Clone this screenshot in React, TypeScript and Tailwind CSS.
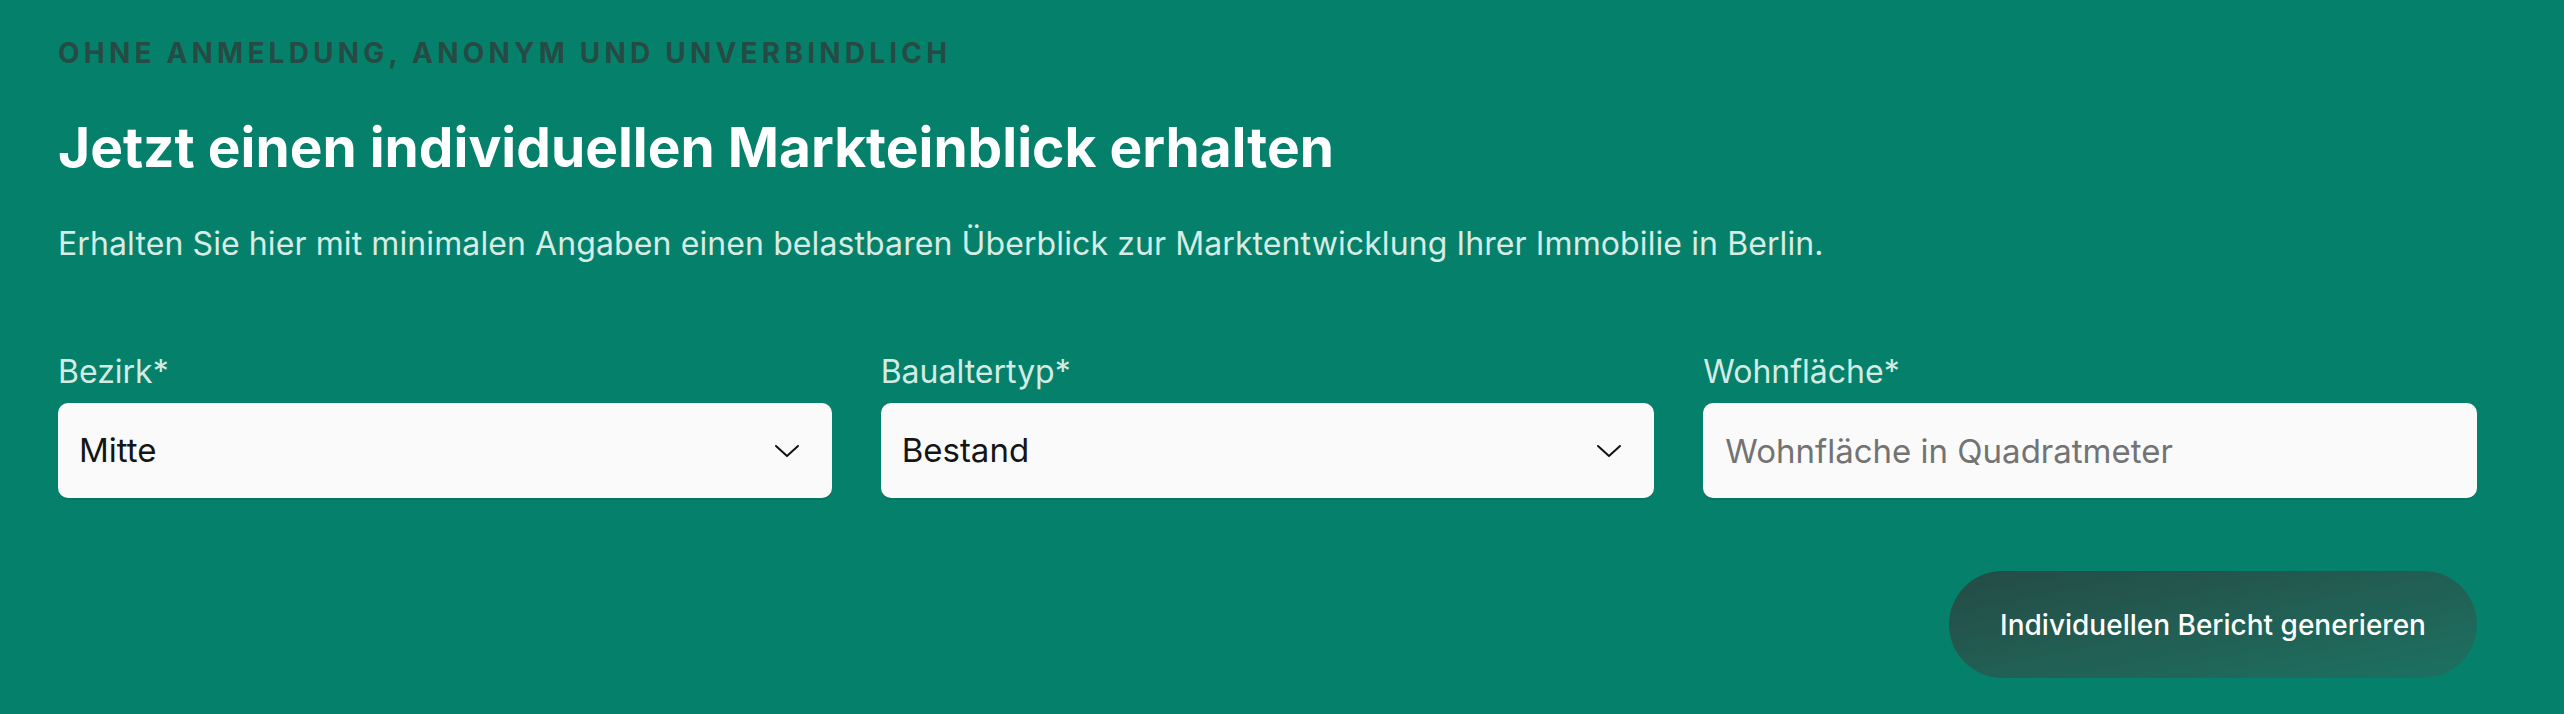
import { useState } from "react";

function Chevron() {
  return (
    <svg
      className="h-[14px] w-[26px] shrink-0"
      viewBox="0 0 26 14"
      fill="none"
      stroke="#111"
      strokeWidth="2"
      strokeLinecap="round"
      strokeLinejoin="round"
    >
      <path d="M2 2l11 10L24 2" />
    </svg>
  );
}

function SelectField({ label, value }: { label: string; value: string }) {
  return (
    <div className="flex flex-col">
      <label className="text-[32px] leading-[48px] text-[#d3ebe2]">{label}</label>
      <div className="mt-[7px] flex h-[95px] items-center justify-between rounded-[10px] bg-[#fafafa] pl-[21px] pr-[32px] shadow-[0_2px_0_rgba(0,0,0,0.08)]">
        <span className="text-[33px] text-[#151515]">{value}</span>
        <Chevron />
      </div>
    </div>
  );
}

export default function App() {
  const [area, setArea] = useState("");

  return (
    <div
      className="min-h-[714px] w-full bg-[#05816b] pl-[58px] pr-[87px] pt-[32px] pb-[37px]"
      style={{ fontFamily: "Inter, 'Noto Sans', sans-serif" }}
    >
      <p className="text-[28px] font-bold uppercase leading-[42px] tracking-[0.15em] text-[#264b44]">
        Ohne Anmeldung, anonym und unverbindlich
      </p>
      <h1 className="mt-[40px] text-[55px] font-bold leading-[66px] text-white">
        Jetzt einen individuellen Markteinblick erhalten
      </h1>
      <p className="mt-[40px] text-[32px] leading-[48px] tracking-[0.1px] text-[#d6ece4]">
        Erhalten Sie hier mit minimalen Angaben einen belastbaren Überblick zur Marktentwicklung Ihrer
        Immobilie in Berlin.
      </p>

      <div className="mt-[80px] grid grid-cols-3 gap-[49px]">
        <SelectField label="Bezirk*" value="Mitte" />
        <SelectField label="Baualtertyp*" value="Bestand" />
        <div className="flex flex-col">
          <label className="text-[32px] leading-[48px] text-[#d3ebe2]">Wohnfläche*</label>
          <input
            className="mt-[7px] h-[95px] rounded-[10px] bg-[#fafafa] px-[22px] text-[33px] text-[#151515] placeholder:text-[#737373] shadow-[0_2px_0_rgba(0,0,0,0.08)] outline-none"
            placeholder="Wohnfläche in Quadratmeter"
            value={area}
            onChange={(e) => setArea(e.target.value)}
          />
        </div>
      </div>

      <div className="mt-[73px] flex justify-end">
        <button className="h-[107px] w-[528px] rounded-full bg-gradient-to-br from-[#244b45] to-[#1a7262] text-[28px] font-medium text-white">
          Individuellen Bericht generieren
        </button>
      </div>
    </div>
  );
}
